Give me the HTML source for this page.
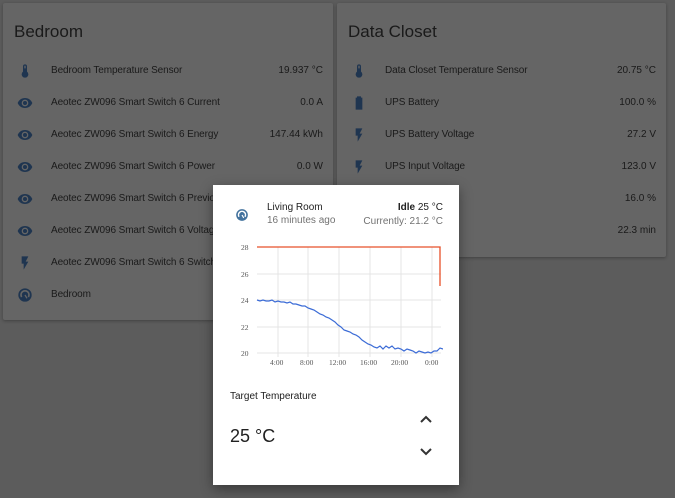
<!DOCTYPE html><html><head><style>
body{margin:0;width:675px;height:498px;background:#5c5c5c;font-family:"Liberation Sans",sans-serif;position:relative;overflow:hidden;color:#1c1c1c}
.card{position:absolute;background:#656565;border-radius:2px;box-shadow:0 1px 3px rgba(0,0,0,.3)}
.h{position:absolute;left:11px;top:19px;font-size:17px;color:#1a1a1a}
.row{position:absolute;left:0;right:0;height:20px;font-size:10px;line-height:20px;color:#1a1a1a}
.row .ic{position:absolute;left:14px;top:2px;width:16px;height:16px;fill:#1f3550;color:#1f3550}
.row .ic path,.row .ic circle{fill:#1f3550}
.row .ic path.st{fill:none;stroke:#656565}
.row .n{position:absolute;left:48px;letter-spacing:-.1px}
.row .v{position:absolute;right:10px}
.dlg{position:absolute;left:213px;top:185px;width:246px;height:300px;background:#fff;box-shadow:0 4px 12px rgba(0,0,0,.4)}
</style></head><body>
<div class="card" style="left:3px;top:3px;width:330px;height:317px">
<div class="h">Bedroom</div>
<div class="row" style="top:58px"><svg class="ic" viewBox="0 0 24 24"><path d="M15 13V5a3 3 0 0 0-6 0v8a5 5 0 1 0 6 0zm-3-9a1 1 0 0 1 1 1v3h-2V5a1 1 0 0 1 1-1z"/></svg><span class="n">Bedroom Temperature Sensor</span><span class="v">19.937 °C</span></div>
<div class="row" style="top:90px"><svg class="ic" viewBox="0 0 24 24"><path d="M12 4.5C7 4.5 2.7 7.6 1 12c1.7 4.4 6 7.5 11 7.5s9.3-3.1 11-7.5c-1.7-4.4-6-7.5-11-7.5zM12 17a5 5 0 1 1 0-10 5 5 0 0 1 0 10zm0-8a3 3 0 1 0 0 6 3 3 0 0 0 0-6z"/></svg><span class="n">Aeotec ZW096 Smart Switch 6 Current</span><span class="v">0.0 A</span></div>
<div class="row" style="top:122px"><svg class="ic" viewBox="0 0 24 24"><path d="M12 4.5C7 4.5 2.7 7.6 1 12c1.7 4.4 6 7.5 11 7.5s9.3-3.1 11-7.5c-1.7-4.4-6-7.5-11-7.5zM12 17a5 5 0 1 1 0-10 5 5 0 0 1 0 10zm0-8a3 3 0 1 0 0 6 3 3 0 0 0 0-6z"/></svg><span class="n">Aeotec ZW096 Smart Switch 6 Energy</span><span class="v">147.44 kWh</span></div>
<div class="row" style="top:154px"><svg class="ic" viewBox="0 0 24 24"><path d="M12 4.5C7 4.5 2.7 7.6 1 12c1.7 4.4 6 7.5 11 7.5s9.3-3.1 11-7.5c-1.7-4.4-6-7.5-11-7.5zM12 17a5 5 0 1 1 0-10 5 5 0 0 1 0 10zm0-8a3 3 0 1 0 0 6 3 3 0 0 0 0-6z"/></svg><span class="n">Aeotec ZW096 Smart Switch 6 Power</span><span class="v">0.0 W</span></div>
<div class="row" style="top:186px"><svg class="ic" viewBox="0 0 24 24"><path d="M12 4.5C7 4.5 2.7 7.6 1 12c1.7 4.4 6 7.5 11 7.5s9.3-3.1 11-7.5c-1.7-4.4-6-7.5-11-7.5zM12 17a5 5 0 1 1 0-10 5 5 0 0 1 0 10zm0-8a3 3 0 1 0 0 6 3 3 0 0 0 0-6z"/></svg><span class="n">Aeotec ZW096 Smart Switch 6 Previous</span></div>
<div class="row" style="top:218px"><svg class="ic" viewBox="0 0 24 24"><path d="M12 4.5C7 4.5 2.7 7.6 1 12c1.7 4.4 6 7.5 11 7.5s9.3-3.1 11-7.5c-1.7-4.4-6-7.5-11-7.5zM12 17a5 5 0 1 1 0-10 5 5 0 0 1 0 10zm0-8a3 3 0 1 0 0 6 3 3 0 0 0 0-6z"/></svg><span class="n">Aeotec ZW096 Smart Switch 6 Voltage</span></div>
<div class="row" style="top:250px"><svg class="ic" viewBox="0 0 24 24"><path d="M7 2v11h3v9l7-12h-4l4-8z"/></svg><span class="n">Aeotec ZW096 Smart Switch 6 Switch</span></div>
<div class="row" style="top:282px"><svg class="ic" viewBox="0 0 24 24"><circle cx="12" cy="12" r="10"/><path class="st" d="M7 15a6 6 0 1 1 10 0" stroke-width="2.5"/><path class="st" d="M12 12l3 5" stroke-width="2"/></svg><span class="n">Bedroom</span></div>
</div>
<div class="card" style="left:337px;top:3px;width:329px;height:254px">
<div class="h">Data Closet</div>
<div class="row" style="top:58px"><svg class="ic" viewBox="0 0 24 24"><path d="M15 13V5a3 3 0 0 0-6 0v8a5 5 0 1 0 6 0zm-3-9a1 1 0 0 1 1 1v3h-2V5a1 1 0 0 1 1-1z"/></svg><span class="n">Data Closet Temperature Sensor</span><span class="v">20.75 °C</span></div>
<div class="row" style="top:90px"><svg class="ic" viewBox="0 0 24 24"><path d="M9 2h6v2h2v18H7V4h2z"/></svg><span class="n">UPS Battery</span><span class="v">100.0 %</span></div>
<div class="row" style="top:122px"><svg class="ic" viewBox="0 0 24 24"><path d="M7 2v11h3v9l7-12h-4l4-8z"/></svg><span class="n">UPS Battery Voltage</span><span class="v">27.2 V</span></div>
<div class="row" style="top:154px"><svg class="ic" viewBox="0 0 24 24"><path d="M7 2v11h3v9l7-12h-4l4-8z"/></svg><span class="n">UPS Input Voltage</span><span class="v">123.0 V</span></div>
<div class="row" style="top:186px"><span class="v">16.0 %</span></div>
<div class="row" style="top:218px"><span class="v">22.3 min</span></div>
</div>
<div class="dlg">
<svg style="position:absolute;left:22px;top:23px" width="14" height="14" viewBox="0 0 24 24"><circle cx="12" cy="12" r="10" fill="#44739e"/><path d="M7 15a6 6 0 1 1 10 0" stroke="#fff" stroke-width="2.5" fill="none"/><path d="M12 12l3 5" stroke="#fff" stroke-width="2"/></svg>
<div style="position:absolute;left:54px;top:17px;font-size:10px;color:#212121">Living Room</div>
<div style="position:absolute;left:54px;top:30px;font-size:10px;color:#727272">16 minutes ago</div>
<div style="position:absolute;right:16px;top:17px;font-size:10px;color:#212121"><b>Idle</b> 25 °C</div>
<div style="position:absolute;right:16px;top:31px;font-size:10px;color:#727272">Currently: 21.2 °C</div>
<svg style="position:absolute;left:17px;top:58px" width="213" height="135" viewBox="0 0 213 135" font-family="Liberation Serif" font-size="7.5" fill="#555">
<g stroke="#e4e4e4" stroke-width="1">
<line x1="27" y1="4" x2="211" y2="4"/><line x1="27" y1="31" x2="211" y2="31"/><line x1="27" y1="57" x2="211" y2="57"/><line x1="27" y1="84" x2="211" y2="84"/><line x1="27" y1="110" x2="211" y2="110"/>
<line x1="48" y1="4" x2="48" y2="114"/><line x1="78" y1="4" x2="78" y2="114"/><line x1="109" y1="4" x2="109" y2="114"/><line x1="140" y1="4" x2="140" y2="114"/><line x1="171" y1="4" x2="171" y2="114"/><line x1="202" y1="4" x2="202" y2="114"/></g>
<text x="11" y="7">28</text><text x="11" y="34">26</text><text x="11" y="60">24</text><text x="11" y="87">22</text><text x="11" y="113">20</text>
<text x="40" y="122">4:00</text><text x="70" y="122">8:00</text><text x="99" y="122">12:00</text><text x="130" y="122">16:00</text><text x="161" y="122">20:00</text><text x="195" y="122">0:00</text>
<path d="M27 4H210V43" stroke="#e8502a" stroke-width="1.3" fill="none"/>
<path d="M27 57l3 1 3-1 3 1 3 0 3-1 3 2 3-1 3 1 3 0 3 1 3-1 3 2 3 0 3 1 3 1 3 0 3 2 3 1 3 1 3 2 3 2 3 1 3 2 3 1 3 2 3 2 3 3 3 2 3 3 3 1 3 1 3 2 3 1 3 2 3 3 3 2 3 2 3 1 3 2 3 1 3-2 3 3 3-3 3 2 3-2 3 3 3-1 3 1 3 2 3-2 3 1 3 1 3 2 3-2 3 1 3 1 3-1 3 1 3-2 3 0 3-3 3 1 3-2 3 0 3-3 3 1 3 0 3-2 3 1 3 0 3-2 3 3 2-3" stroke="#3b6bd6" stroke-width="1.2" fill="none"/>
</svg>
<div style="position:absolute;left:17px;top:206px;font-size:10px;color:#212121">Target Temperature</div>
<div style="position:absolute;left:17px;top:241px;font-size:18px;color:#212121">25 °C</div>
<svg style="position:absolute;left:206px;top:229px" width="14" height="10" viewBox="0 0 14 10"><path d="M2 8l5-5 5 5" stroke="#333" stroke-width="2" fill="none"/></svg>
<svg style="position:absolute;left:206px;top:262px" width="14" height="10" viewBox="0 0 14 10"><path d="M2 2l5 5 5-5" stroke="#333" stroke-width="2" fill="none"/></svg>
</div>
</body></html>
